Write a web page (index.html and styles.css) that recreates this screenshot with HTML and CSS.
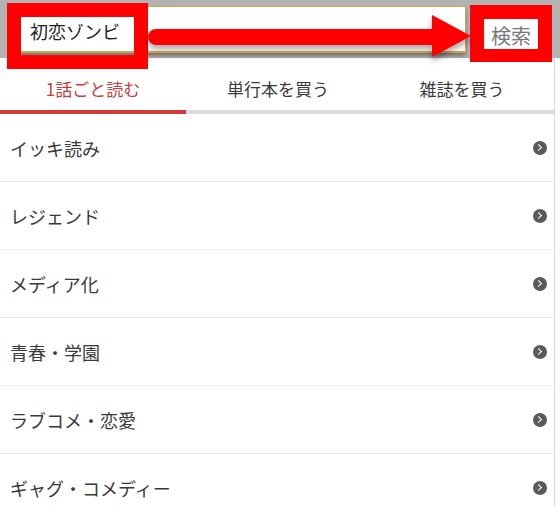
FILE: index.html
```html
<!DOCTYPE html>
<html lang="ja">
<head>
  <meta charset="UTF-8" />
  <meta name="viewport" content="width=device-width, initial-scale=1.0" />
  <title>検索</title>
  <link rel="stylesheet" href="styles.css">
</head>
<body>
  <header class="header">
    <div class="search-box">初恋ゾンビ</div>
    <button class="search-btn">検索</button>

    <!-- annotation overlays -->
    <div class="mark mark-input"></div>
    <div class="mark mark-btn"></div>
    <svg class="mark-arrow" width="340" height="60" viewBox="140 10 340 60">
      <rect x="148" y="29" width="292" height="16" rx="8" fill="#ff0000" />
      <polygon points="432,15 471,36 432,57" fill="#ff0000" />
    </svg>
  </header>

  <div class="content">
    <nav class="tabs">
      <div class="tab active">1話ごと読む</div>
      <div class="tab">単行本を買う</div>
      <div class="tab">雑誌を買う</div>
    </nav>

    <ul class="menu">
      <li>イッキ読み <span class="chev"></span></li>
      <li>レジェンド <span class="chev"></span></li>
      <li>メディア化 <span class="chev"></span></li>
      <li>青春・学園 <span class="chev"></span></li>
      <li>ラブコメ・恋愛 <span class="chev"></span></li>
      <li>ギャグ・コメディー <span class="chev"></span></li>
    </ul>
  </div>
</body>
</html>
```

FILE: styles.css
```css
body {
  margin: 0;
  background: #fff;
  font-family: "Noto Sans CJK JP", "Noto Sans", sans-serif;
  color: #3a3a3a;
  overflow: hidden;
}
.header {
  position: relative;
  height: 58px;
  box-sizing: border-box;
  background: #b3b3b3;
  display: flex;
  align-items: flex-start;
  padding: 6px 0 0 15px;
}
.search-box {
  width: 451px;
  height: 47px;
  box-sizing: border-box;
  background: #fff;
  border: 1px solid #d2a44c;
  border-bottom-width: 2px;
  box-shadow: 0 3px 4px rgba(0, 0, 0, 0.35);
  display: flex;
  align-items: center;
  padding: 3px 0 0 14px;
  font-size: 18px;
  color: #222;
}
.search-btn {
  margin: 8px 0 0 14px;
  width: 62px;
  height: 42px;
  border: none;
  background: #fff;
  font-family: inherit;
  font-size: 20px;
  color: #777;
  padding: 0;
}
.mark {
  position: absolute;
  border: 14px solid #ff0000;
  box-sizing: border-box;
  z-index: 2;
}
.mark-input {
  left: 7px;
  top: 3px;
  width: 141px;
  height: 66px;
}
.mark-btn {
  left: 470px;
  top: 5px;
  width: 82px;
  height: 57px;
  border-bottom-width: 13px;
}
.mark-arrow {
  position: absolute;
  left: 140px;
  top: 10px;
  z-index: 2;
  filter: drop-shadow(0 4px 3px rgba(0, 0, 0, 0.35));
}
.content {
  width: 554px;
  border-right: 1px solid #d8d8d8;
  height: 448px;
}
.tabs {
  display: flex;
  height: 56px;
  box-sizing: border-box;
}
.tab {
  flex: 1;
  display: flex;
  align-items: center;
  justify-content: center;
  font-size: 17px;
  color: #3a3a3a;
  border-bottom: 4px solid #dcdcdc;
  padding-top: 9px;
}
.tab.active {
  color: #cc3b3b;
  border-bottom-color: #d83a3a;
  flex: 0 0 186px;
}
.menu {
  list-style: none;
  margin: 0;
  padding: 0;
}
.menu li {
  height: 67px;
  border-bottom: 1px solid #ececec;
  display: flex;
  align-items: center;
  justify-content: space-between;
  padding: 0 7px 0 10px;
  font-size: 18px;
  color: #3a3a3a;
}
.chev {
  width: 14px;
  height: 14px;
  border-radius: 50%;
  background: #5a5a5a;
  position: relative;
}
.chev::after {
  content: "";
  position: absolute;
  left: 3px;
  top: 4.5px;
  width: 4px;
  height: 4px;
  border-top: 1.6px solid #fff;
  border-right: 1.6px solid #fff;
  transform: rotate(45deg);
}
```
